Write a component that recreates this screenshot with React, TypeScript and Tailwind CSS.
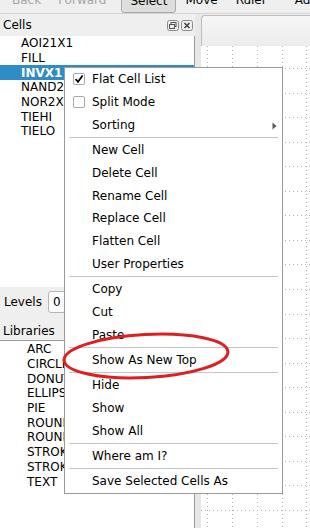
import React from "react";

const cells = ["AOI21X1", "FILL", "INVX1", "NAND2", "NOR2X", "TIEHI", "TIELO"];
const libs = ["ARC", "CIRCLE", "DONUT", "ELLIPSE", "PIE", "ROUNDED", "ROUNDEDX", "STROKE", "STROKEX", "TEXT"];

type Entry =
  | { kind: "item"; label: string; check?: boolean; arrow?: boolean }
  | { kind: "sep" };

const menu: Entry[] = [
  { kind: "item", label: "Flat Cell List", check: true },
  { kind: "item", label: "Split Mode", check: false },
  { kind: "item", label: "Sorting", arrow: true },
  { kind: "sep" },
  { kind: "item", label: "New Cell" },
  { kind: "item", label: "Delete Cell" },
  { kind: "item", label: "Rename Cell" },
  { kind: "item", label: "Replace Cell" },
  { kind: "item", label: "Flatten Cell" },
  { kind: "item", label: "User Properties" },
  { kind: "sep" },
  { kind: "item", label: "Copy" },
  { kind: "item", label: "Cut" },
  { kind: "item", label: "Paste" },
  { kind: "sep" },
  { kind: "item", label: "Show As New Top" },
  { kind: "sep" },
  { kind: "item", label: "Hide" },
  { kind: "item", label: "Show" },
  { kind: "item", label: "Show All" },
  { kind: "sep" },
  { kind: "item", label: "Where am I?" },
  { kind: "sep" },
  { kind: "item", label: "Save Selected Cells As" },
];

const Checkbox: React.FC<{ checked: boolean }> = ({ checked }) => (
  <div className="w-[12px] h-[12px] border border-[#a8a8a8] rounded-[2px] bg-white flex items-center justify-center">
    {checked && (
      <svg width="10" height="10" viewBox="0 0 10 10">
        <path d="M1.6 5.2 L4 7.8 L8.6 1.6" fill="none" stroke="#000" strokeWidth="1.7" />
      </svg>
    )}
  </div>
);

const Grid: React.FC = () => {
  const xs = [6, 31, 56, 81, 105];
  const ys = Array.from({ length: 20 }, (_, k) => 22 + k * 24.55);
  return (
    <svg className="w-full h-full" width="109" height="482">
      {xs.map((x) => (
        <line key={"v" + x} x1={x + 0.5} y1={0} x2={x + 0.5} y2={482} stroke="#b3b3b3" strokeWidth="1" strokeDasharray="1 3" />
      ))}
      {ys.map((y) => (
        <line key={"h" + y} x1={0} y1={Math.round(y) + 0.5} x2={109} y2={Math.round(y) + 0.5} stroke="#b3b3b3" strokeWidth="1" strokeDasharray="1 3" />
      ))}
    </svg>
  );
};

export default function App() {
  return (
    <div className="relative w-[310px] h-[528px] overflow-hidden bg-[#efefef] text-[12px] leading-[14px] text-black font-['DejaVu_Sans',sans-serif]">
      {/* toolbar */}
      <div className="h-[14px] overflow-hidden border-b border-[#d4d4d4]">
        <div className="flex items-start -mt-[10px]">
          <span className="ml-[12px] mt-[3px] text-[#a6a6a6]">Back</span>
          <span className="ml-[17px] mt-[3px] text-[#a6a6a6]">Forward</span>
          <span className="ml-[13px] w-px h-[24px] bg-[#cfcfcf]"></span>
          <span className="ml-[2px] px-[8px] pt-[3px] pb-[4px] border border-[#a9a9a9] rounded-[3px] bg-[#dedede]">Select</span>
          <span className="ml-[9px] mt-[3px]">Move</span>
          <span className="ml-[18px] mt-[3px]">Ruler</span>
          <span className="ml-[28px] mt-[3px] whitespace-nowrap">Add</span>
        </div>
      </div>

      <div className="flex h-[514px]">
        {/* left column */}
        <div className="w-[195px] flex flex-col">
          <div className="h-[22px] flex items-center justify-between pl-[3px] pr-[2px]">
            <span>Cells</span>
            <div className="flex gap-[2px]">
              <svg width="12" height="11" viewBox="0 0 12 11">
                <rect x="0.5" y="0.5" width="11" height="10" rx="2" fill="none" stroke="#8a8a8a" />
                <rect x="4" y="2.5" width="5" height="4" fill="none" stroke="#555" />
                <rect x="2.5" y="4.5" width="5" height="4" fill="#efefef" stroke="#555" />
              </svg>
              <svg width="12" height="11" viewBox="0 0 12 11">
                <rect x="0.5" y="0.5" width="11" height="10" rx="2" fill="none" stroke="#8a8a8a" />
                <path d="M3.5 3 L8.5 8 M8.5 3 L3.5 8" stroke="#444" strokeWidth="1.6" />
              </svg>
            </div>
          </div>
          <div className="h-[251px] bg-white border-r border-[#9c9c9c]">
            {cells.map((c) =>
              c === "INVX1" ? (
                <div key={c} className="h-[14.7px] flex items-center pl-[21px] bg-[#308cc6] text-white font-bold">
                  {c}
                </div>
              ) : (
                <div key={c} className="h-[14.7px] flex items-center pl-[21px]">
                  {c}
                </div>
              )
            )}
          </div>
          <div className="mt-[4px] h-[22px] flex items-center">
            <span className="pl-[4px]">Levels</span>
            <div className="ml-[6px] w-[60px] h-[22px] bg-white border border-[#b5b5b5] rounded-[3px] flex items-center pl-[4px]">0</div>
          </div>
          <div className="h-[27px] flex items-end pb-[2px] pl-[3px]">Libraries</div>
          <div className="flex-1 bg-white border-t border-r border-[#9c9c9c] pt-px overflow-hidden">
            {libs.map((l) => (
              <div key={l} className="h-[14.7px] flex items-center pl-[27px] whitespace-nowrap">
                {l}
              </div>
            ))}
          </div>
        </div>

        {/* splitter */}
        <div className="w-[6px] bg-[#e8e8e8]"></div>

        {/* right area */}
        <div className="flex-1 flex flex-col">
          <div className="mt-px h-[31px] border-t border-l border-[#bdbdbd] rounded-tl-[4px] bg-gradient-to-b from-[#f6f6f6] to-[#ececec]"></div>
          <div className="flex-1 bg-white overflow-hidden">
            <Grid />
          </div>
        </div>
      </div>

      {/* context menu */}
      <div className="absolute left-[64px] top-[67px] w-[219px] bg-white border border-[#9a9a9a]">
        {menu.map((e, i) =>
          e.kind === "sep" ? (
            <div key={i} className="h-[2.5px] flex items-center px-[4px]">
              <div className="h-px w-full bg-[#c4c4c4]"></div>
            </div>
          ) : (
            <div key={i} className="relative h-[22.75px] flex items-center">
              <div className="w-[27px] pl-[8px] flex items-center">
                {e.check !== undefined && <Checkbox checked={e.check} />}
              </div>
              <span className="whitespace-nowrap">{e.label}</span>
              {e.arrow && (
                <svg className="absolute right-[5px] top-[8px]" width="5" height="8" viewBox="0 0 5 8">
                  <path d="M0.5 0.5 L4.5 4 L0.5 7.5 Z" fill="#5a5a5a" />
                </svg>
              )}
            </div>
          )
        )}
      </div>

      {/* red annotation ellipse */}
      <svg className="absolute left-0 top-0 pointer-events-none" width="310" height="528">
        <ellipse cx="146" cy="356" rx="82" ry="21.5" fill="none" stroke="#de1f1f" strokeWidth="3" transform="rotate(-3 146 356)" />
      </svg>
    </div>
  );
}
